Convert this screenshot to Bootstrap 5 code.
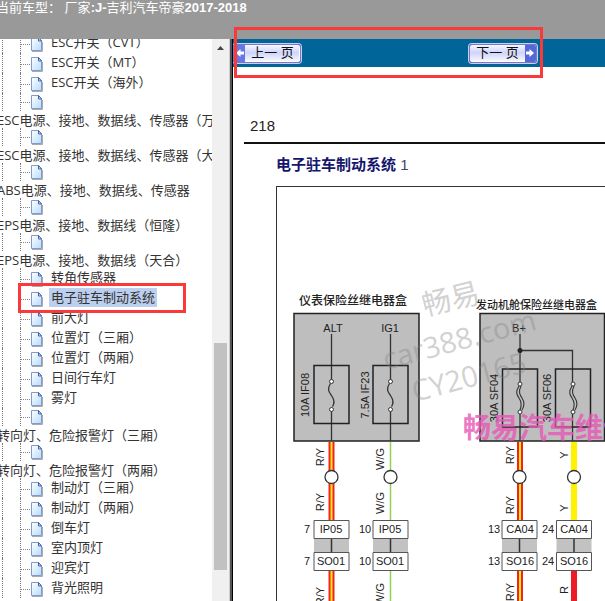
<!DOCTYPE html>
<html lang="zh-CN">
<head>
<meta charset="utf-8">
<meta name="viewport" content="width=device-width, initial-scale=1">
<title>电子驻车制动系统</title>
<link href="https://cdn.jsdelivr.net/npm/bootstrap@5.3.0/dist/css/bootstrap.min.css" rel="stylesheet">
<style>
body{font-family:"Open Sans","Noto Sans CJK SC",sans-serif;font-size:13px;line-height:18px;color:#333}
.top-bar{height:39px;background:#999;color:#fff;font:13px/16px "Liberation Sans","Noto Sans CJK SC",sans-serif}
.top-bar p{margin-left:-4px}
.side{width:233px}
.tree{margin-top:-6px}
.tree li{height:20px;position:relative}
.tree li.blank{height:18px}
.tree li.group{height:17px;margin-left:-3px}
.tree a{color:#333;text-decoration:none}
.rails{width:31px;height:100%;padding-left:2px;flex:none}
.rails::before{content:"";width:18px;height:100%;border-left:1px dotted #777}
.rails::after{content:"";width:11px;height:100%;border-left:1px dotted #777;background:repeating-linear-gradient(90deg,#888 0 1px,transparent 1px 2px) 0 11px/11px 1px no-repeat}
.blank .rails::after{background-position:0 9px}
.page-icon{width:12px;height:15px;margin-top:4px;flex:none}
.blank .page-icon{margin-top:2px}
.tree .item a{margin-left:6px;padding:0 2px;height:19px}
.tree a.chosen{background:#bccfee}
.scroll-track{width:17px;background:#f0f0f0}
.scroll-thumb{background:#c1c1c1;margin:0 2px;height:227px}
.track-gap{height:284px}
.splitter{width:4px;background:linear-gradient(90deg,#ccc 0 1px,#555 1px 3px,#000 3px)}
.pager{height:28px;background:#069}
.step{height:19px;width:68px;padding:0;border:1px solid #7a78c4;border-radius:3px;box-shadow:inset -1px -1px 0 #fff,0 0 0 1px #c9cef5;background:linear-gradient(180deg,#f8f8ff,#cfd4fb 45%,#fafaff);color:#111;font:13px/16px "Liberation Sans","Noto Sans CJK SC",sans-serif;overflow:hidden}
.step svg{width:11px;height:18px;flex:none}
.step span{flex:1}
.pager-gap{width:168px}
.folio{font:15px/20px "Liberation Sans",sans-serif;color:#222;padding:49px 0 0 17px}
.rule{height:2px;background:#111;margin:6px 0 0 11px}
.sheet-title{font:bold 15px/20px "Liberation Sans","Noto Sans CJK SC",sans-serif;color:#15156e;margin:11px 0 11px 43px}
.sheet-title span{font-weight:400;color:#446}
.frame{margin-left:43px;border:solid #333;border-width:1px 0 0 1px}
.frame svg{display:block;flex:none}
.mark-box{position:absolute;border:3px solid #f93a3a;pointer-events:none}
.mark-pager{left:234px;top:27px;width:309px;height:51px}
.mark-item{left:18px;top:-5px;width:168px;height:30px;z-index:2}
</style>
<script src="https://cdn.jsdelivr.net/npm/bootstrap@5.3.0/dist/js/bootstrap.bundle.min.js"></script>
</head>
<body class="vh-100 d-flex flex-column overflow-hidden position-relative">
<svg width="0" height="0" class="position-absolute" aria-hidden="true">
 <defs>
  <linearGradient id="paper" x1="0" y1="0" x2="1" y2="1"><stop offset="0" stop-color="#fff"/><stop offset="1" stop-color="#b4dcff"/></linearGradient>
  <symbol id="page" viewBox="0 0 12 15"><path d="M1 14.500H11.500V5" fill="none" stroke="#aaa"/><path d="M.5.5H7.500L10.500 4V13.500H.5Z" fill="url(#paper)" stroke="#8399cc"/><path d="M7.500.500V4H10.500" fill="#dce8fa" stroke="#4464a8"/><path d="M7.500.500 10.500 4" stroke="#3a5ba5"/></symbol>
 </defs>
</svg>
<header class="top-bar flex-shrink-0 overflow-hidden"><p class="mb-0 text-nowrap">当前车型： 厂家<b>:J-</b>吉利汽车帝豪<b>2017-2018</b></p></header>
<div class="d-flex flex-grow-1 overflow-hidden">
 <aside class="side d-flex flex-shrink-0 overflow-hidden">
  <nav class="flex-grow-1 overflow-hidden" aria-label="电路图目录">
   <ul class="tree list-unstyled mb-0 text-nowrap">
    <li class="item d-flex"><i class="rails d-flex"></i><svg class="page-icon"><use href="#page"/></svg><a href="#">ESC开关（CVT）</a></li>
    <li class="item d-flex"><i class="rails d-flex"></i><svg class="page-icon"><use href="#page"/></svg><a href="#">ESC开关（MT）</a></li>
    <li class="item d-flex"><i class="rails d-flex"></i><svg class="page-icon"><use href="#page"/></svg><a href="#">ESC开关（海外）</a></li>
    <li class="blank d-flex"><i class="rails d-flex"></i><svg class="page-icon"><use href="#page"/></svg></li>
    <li class="group"><a href="#">ESC电源、接地、数据线、传感器（万向）</a></li>
    <li class="blank d-flex"><i class="rails d-flex"></i><svg class="page-icon"><use href="#page"/></svg></li>
    <li class="group"><a href="#">ESC电源、接地、数据线、传感器（大陆）</a></li>
    <li class="blank d-flex"><i class="rails d-flex"></i><svg class="page-icon"><use href="#page"/></svg></li>
    <li class="group"><a href="#">ABS电源、接地、数据线、传感器</a></li>
    <li class="blank d-flex"><i class="rails d-flex"></i><svg class="page-icon"><use href="#page"/></svg></li>
    <li class="group"><a href="#">EPS电源、接地、数据线（恒隆）</a></li>
    <li class="blank d-flex"><i class="rails d-flex"></i><svg class="page-icon"><use href="#page"/></svg></li>
    <li class="group"><a href="#">EPS电源、接地、数据线（天合）</a></li>
    <li class="item d-flex"><i class="rails d-flex"></i><svg class="page-icon"><use href="#page"/></svg><a href="#">转角传感器</a></li>
    <li class="item d-flex"><i class="rails d-flex"></i><svg class="page-icon"><use href="#page"/></svg><a href="#" class="chosen" aria-current="page">电子驻车制动系统</a><span class="mark-box mark-item"></span></li>
    <li class="item d-flex"><i class="rails d-flex"></i><svg class="page-icon"><use href="#page"/></svg><a href="#">前大灯</a></li>
    <li class="item d-flex"><i class="rails d-flex"></i><svg class="page-icon"><use href="#page"/></svg><a href="#">位置灯（三厢）</a></li>
    <li class="item d-flex"><i class="rails d-flex"></i><svg class="page-icon"><use href="#page"/></svg><a href="#">位置灯（两厢）</a></li>
    <li class="item d-flex"><i class="rails d-flex"></i><svg class="page-icon"><use href="#page"/></svg><a href="#">日间行车灯</a></li>
    <li class="item d-flex"><i class="rails d-flex"></i><svg class="page-icon"><use href="#page"/></svg><a href="#">雾灯</a></li>
    <li class="blank d-flex"><i class="rails d-flex"></i><svg class="page-icon"><use href="#page"/></svg></li>
    <li class="group"><a href="#">转向灯、危险报警灯（三厢）</a></li>
    <li class="blank d-flex"><i class="rails d-flex"></i><svg class="page-icon"><use href="#page"/></svg></li>
    <li class="group"><a href="#">转向灯、危险报警灯（两厢）</a></li>
    <li class="item d-flex"><i class="rails d-flex"></i><svg class="page-icon"><use href="#page"/></svg><a href="#">制动灯（三厢）</a></li>
    <li class="item d-flex"><i class="rails d-flex"></i><svg class="page-icon"><use href="#page"/></svg><a href="#">制动灯（两厢）</a></li>
    <li class="item d-flex"><i class="rails d-flex"></i><svg class="page-icon"><use href="#page"/></svg><a href="#">倒车灯</a></li>
    <li class="item d-flex"><i class="rails d-flex"></i><svg class="page-icon"><use href="#page"/></svg><a href="#">室内顶灯</a></li>
    <li class="item d-flex"><i class="rails d-flex"></i><svg class="page-icon"><use href="#page"/></svg><a href="#">迎宾灯</a></li>
    <li class="item d-flex"><i class="rails d-flex"></i><svg class="page-icon"><use href="#page"/></svg><a href="#">背光照明</a></li>
   </ul>
  </nav>
  <div class="scroll-track flex-shrink-0" aria-hidden="true">
   <svg class="d-block" width="17" height="20"><path d="M5 11 8.500 7 12 11Z" fill="#444"/></svg>
   <div class="track-gap"></div>
   <div class="scroll-thumb"></div>
  </div>
  <div class="splitter flex-shrink-0"></div>
 </aside>
 <main class="flex-grow-1 overflow-hidden bg-white">
  <div class="pager d-flex align-items-center">
   <button type="button" class="step d-flex align-items-center flex-shrink-0"><svg viewBox="0 0 11 18"><path d="M0 0H11V18H0Z" fill="#6478e6"/><path d="M2 9 6.500 5V7.500H10V10.500H6.500V13Z" fill="#fff"/></svg><span>上一 页</span></button>
   <div class="pager-gap"></div>
   <button type="button" class="step d-flex align-items-center flex-shrink-0"><span>下一 页</span><svg viewBox="0 0 11 18"><path d="M0 0H11V18H0Z" fill="#5468d8"/><path d="M9 9 4.500 5V7.500H1V10.500H4.500V13Z" fill="#fff"/></svg></button>
  </div>
  <div class="folio">218</div>
  <div class="rule"></div>
  <h1 class="sheet-title text-nowrap">电子驻车制动系统 <span>1</span></h1>
  <div class="frame overflow-hidden d-flex">
   <svg width="600" height="430" viewBox="277 187 600 430" font-family="'Liberation Sans','Noto Sans CJK SC',sans-serif" font-size="11" fill="#222" role="img" aria-label="电子驻车制动系统电路图">
    <defs>
     <g id="link" stroke-width="1"><path d="M-17.500 538H17.500V552H-17.500Z" fill="#c2c2c2"/><path d="M0 538V552" stroke="#333" stroke-width="1.500"/><path d="M-17.500 520.500H17.500V538.500H-17.500ZM-17.500 552.500H17.500V570.500H-17.500Z" fill="#fff" stroke="#555"/></g>
     <g id="fuse" fill="none" stroke="#333"><path d="M-17.500-29H17.500V29H-17.500Z" stroke="#222" stroke-width="1.500"/><path d="M-1-11C-5-5-2-2 0 1S4 8 1 12" stroke-width="1.300"/><circle cy="-13" r="2" fill="#fff"/><circle cy="15" r="2" fill="#fff"/></g>
     <g id="fuse2" fill="none" stroke="#333"><path d="M-17.500-29H17.500V29H-17.500Z" stroke="#222" stroke-width="1.500"/><path d="M-1-12C-5-6-3-3-1 0S2 7 0 12M1-12C-2-6 0-3 2 0S5 7 2 12" stroke-width="1.100"/><circle cy="-14" r="2" fill="#fff"/><circle cy="14" r="2" fill="#fff"/></g>
    </defs>
    <g fill="#bebebe" stroke="#222" stroke-width="1.500"><path d="M294 313.500H419V441H294Z"/><path d="M480 313.500H604.500V441H480Z"/></g>
    <g font-weight="500"><text x="299" y="305" font-size="12">仪表保险丝继电器盒</text><text x="476" y="309">发动机舱保险丝继电器盒</text></g>
    <g fill="none" stroke="#333" stroke-width="1.300"><path d="M331.500 334V379.500M331.500 412V441M390.500 334V379.500M390.500 412V441M520 334V382M520 414V441M520 350.500H572.500V382M572.500 414V441"/></g>
    <circle cx="520" cy="350.500" r="2.500"/>
    <use href="#fuse" x="331.500" y="394.500"/><use href="#fuse" x="390.500" y="394.500"/>
    <use href="#fuse2" x="520" y="398"/><use href="#fuse2" x="573" y="398"/>
    <g text-anchor="middle">
     <text x="333" y="332">ALT</text><text x="390" y="332">IG1</text><text x="519" y="332">B+</text>
     <text transform="translate(309 395) rotate(-90)">10A IF08</text>
     <text transform="translate(369 395) rotate(-90)">7.5A IF23</text>
     <text transform="translate(498 398) rotate(-90)">30A SF04</text>
     <text transform="translate(551 398) rotate(-90)">30A SF06</text>
    </g>
    <g fill="none" stroke-width="6"><path d="M331.500 442V620M520 442V620" stroke="#ee2420"/><path d="M331.500 442V620M520 442V620" stroke="#ffe51e" stroke-width="2"/><path d="M574 442V540" stroke="#fff200"/><path d="M574 560V620" stroke="#ed1c24"/><path d="M390.500 442V620" stroke="#92d050" stroke-width="1.500"/></g>
    <use href="#link" x="331.500"/><use href="#link" x="390.500"/><use href="#link" x="519.500"/><use href="#link" x="574"/>
    <g fill="#fff" stroke="#333" stroke-width="1.300"><circle cx="331.500" cy="477" r="6.500"/><circle cx="390.500" cy="477" r="6.500"/><circle cx="519.500" cy="477" r="6.500"/><circle cx="574" cy="477" r="6.500"/></g>
    <g text-anchor="middle">
     <text x="331" y="533">IP05</text><text x="331" y="565">SO01</text><text x="390" y="533">IP05</text><text x="390" y="565">SO01</text>
     <text x="520" y="533">CA04</text><text x="520" y="565">SO16</text><text x="574" y="533">CA04</text><text x="574" y="565">SO16</text>
     <text x="307" y="533">7</text><text x="307" y="565">7</text><text x="365" y="533">10</text><text x="365" y="565">10</text>
     <text x="494" y="533">13</text><text x="494" y="565">13</text><text x="548" y="533">24</text><text x="548" y="565">24</text>
     <text transform="translate(324 457) rotate(-90)">R/Y</text><text transform="translate(324 502) rotate(-90)">R/Y</text><text transform="translate(324 596) rotate(-90)">R/Y</text>
     <text transform="translate(384 459) rotate(-90)">W/G</text><text transform="translate(384 503) rotate(-90)">W/G</text><text transform="translate(384 594) rotate(-90)">W/G</text>
     <text transform="translate(514 455) rotate(-90)">R/Y</text><text transform="translate(514 505) rotate(-90)">R/Y</text><text transform="translate(514 592) rotate(-90)">R/Y</text>
     <text transform="translate(568 455) rotate(-90)">Y</text><text transform="translate(568 508) rotate(-90)">Y</text><text transform="translate(568 590) rotate(-90)">R</text>
    </g>
    <g fill="#808080" opacity=".35" font-family="'Open Sans','Noto Sans CJK SC',sans-serif" font-size="29">
     <text transform="translate(425 316) rotate(-14)">畅易</text>
     <text transform="translate(386 370) rotate(-15)">car388.com</text>
     <text transform="translate(415 402) rotate(-15)">CY20165</text>
    </g>
    <text x="463" y="438" font-size="28" font-weight="700" fill="#e858b8" opacity=".8">畅易汽车维修</text>
   </svg>
  </div>
 </main>
</div>
<span class="mark-box mark-pager"></span>
</body>
</html>
